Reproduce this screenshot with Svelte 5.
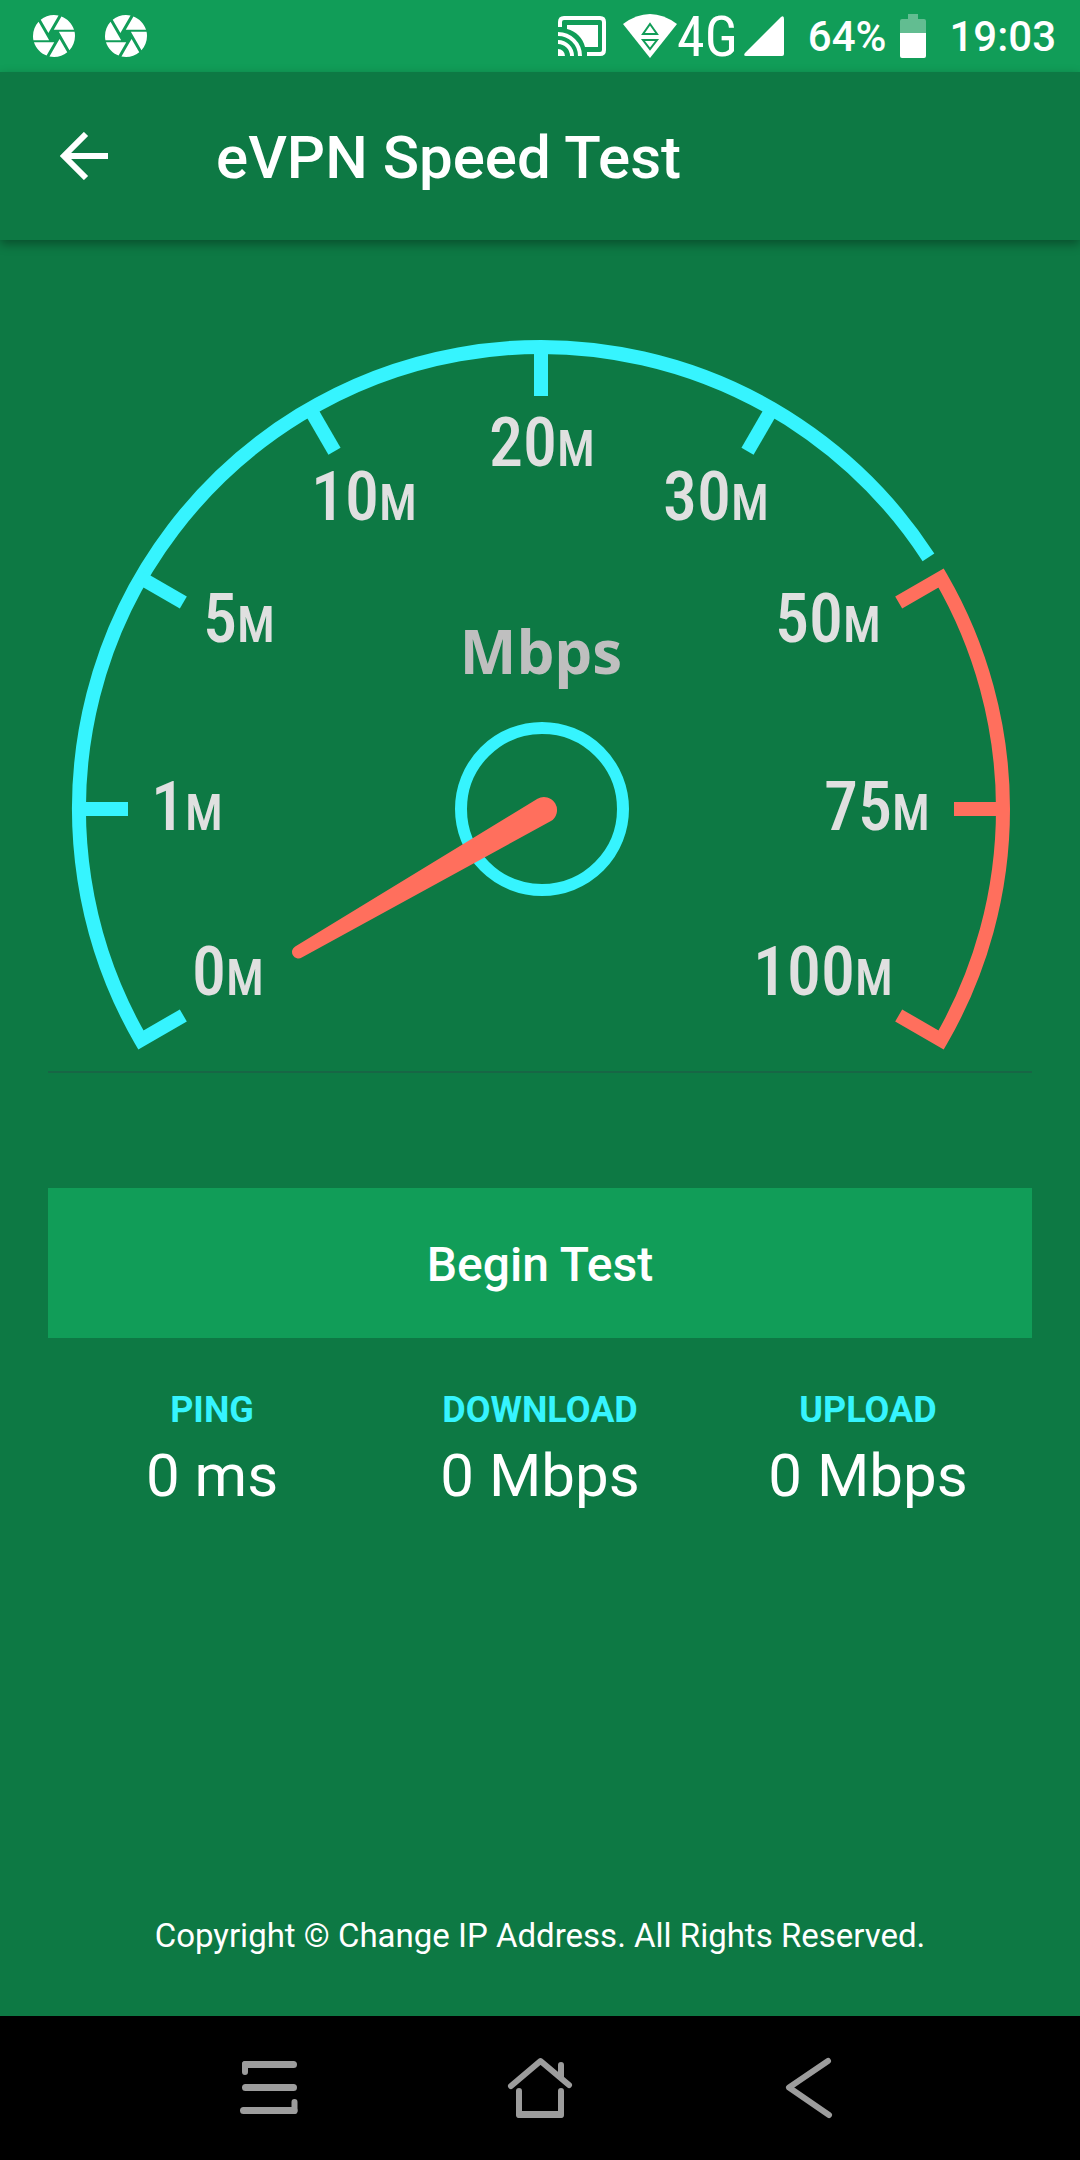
<script lang='ts'>
	// centre and radii of the dial, in gauge units
	const cx = 541;
	const cy = 809;
	const outer = 462;
	const inner = 413;

	const labels = [
		{ value: 0, x: 228, y: 995 },
		{ value: 1, x: 187, y: 830 },
		{ value: 5, x: 239, y: 642 },
		{ value: 10, x: 364, y: 520 },
		{ value: 20, x: 542, y: 466 },
		{ value: 30, x: 716, y: 520 },
		{ value: 50, x: 828, y: 642 },
		{ value: 75, x: 877, y: 830 },
		{ value: 100, x: 823, y: 995 }
	];

	const ticks = [
		{ angle: -90, high: false },
		{ angle: -60, high: false },
		{ angle: -30, high: false },
		{ angle: 0, high: false },
		{ angle: 30, high: false },
		{ angle: 90, high: true }
	];

	const results = [
		{ name: 'PING', value: '0 ms' },
		{ name: 'DOWNLOAD', value: '0 Mbps' },
		{ name: 'UPLOAD', value: '0 Mbps' }
	];

	// angle in degrees, clockwise from the top
	const point = (angle: number, radius: number) => {
		const rad = (angle * Math.PI) / 180;
		return `${cx + radius * Math.sin(rad)} ${cy - radius * Math.cos(rad)}`;
	};

	const lowArc = `M${point(-120, inner)} L${point(-120, outer)} A${outer} ${outer} 0 0 1 ${point(57, outer)}`;
	const highArc = `M${point(60, inner)} L${point(60, outer)} A${outer} ${outer} 0 0 1 ${point(120, outer)} L${point(120, inner)}`;
</script>

<div class='screen'>
	<div class='status'>
		<div class='notifications'>
			{#each [1, 2] as n}
				<svg class='shutter' viewBox='2 2 20 20' aria-hidden='true'>
					<path d='M9.4 10.5l4.77-8.26C13.47 2.09 12.75 2 12 2c-2.4 0-4.6.85-6.32 2.25l3.66 6.35.06-.1zM21.54 9c-.92-2.92-3.15-5.26-6-6.34L11.88 9h9.66zm.26 1h-7.49l.29.5 4.76 8.25C21 16.97 22 14.61 22 12c0-.69-.07-1.35-.2-2zM8.54 12l-3.9-6.75C3.01 7.03 2 9.39 2 12c0 .69.07 1.35.2 2h7.49l-1.15-2zm-6.08 3c.92 2.92 3.15 5.26 6 6.34L12.12 15H2.46zm11.27 0l-3.9 6.76c.7.15 1.42.24 2.17.24 2.4 0 4.6-.85 6.32-2.25l-3.66-6.35-.93 1.6z' />
				</svg>
			{/each}
		</div>
		<div class='system'>
			<svg class='cast' viewBox='0 0 48 40' aria-hidden='true'>
				<path class='line' d='M2 11V6Q2 2 6 2H42Q46 2 46 6V34Q46 38 42 38H29' />
				<path d='M9 9H40V31H27C25 22 18 15 9 13Z' />
				<path class='line' d='M0 26A14 14 0 0 1 14 40M0 18A22 22 0 0 1 22 40' />
				<path d='M0 33A7 7 0 0 1 7 40H0Z' />
			</svg>
			<svg class='wifi' viewBox='0 0 54 44' aria-hidden='true'>
				<path d='M0 10Q27 -10 54 10L27 44Z' />
				<path class='arrows' d='M27 10L34 20H20ZM20 26H34L27 35Z' />
			</svg>
			<span class='network'>4G</span>
			<svg class='signal' viewBox='0 0 40 40' aria-hidden='true'>
				<path d='M37 1Q40 -1 40 3V38Q40 40 38 40H2Q-1 40 1 37Z' />
			</svg>
			<span class='percent'>64%</span>
			<svg class='battery' viewBox='0 0 26 44' aria-hidden='true'>
				<path class='empty' d='M8 0H18V5H24Q26 5 26 7V19H0V7Q0 5 2 5H8Z' />
				<path d='M0 19H26V42Q26 44 24 44H2Q0 44 0 42Z' />
			</svg>
			<span class='clock'>19:03</span>
		</div>
	</div>

	<header>
		<button class='back' aria-label='Back'>
			<svg viewBox='0 0 48 48' aria-hidden='true'>
				<path d='M26 2L4 24L26 46M3 24H48' />
			</svg>
		</button>
		<h1>eVPN Speed Test</h1>
	</header>

	<main>
		<svg class='gauge' viewBox='48 288 984 783' role='img' aria-label='Speed gauge'>
			<path class='low' d={lowArc} />
			<path class='high' d={highArc} />
			{#each ticks as tick}
				<path class={tick.high ? 'high' : 'low'} d='M{point(tick.angle, inner)} L{point(tick.angle, outer)}' />
			{/each}
			{#each labels as label}
				<text class='label' x={label.x} y={label.y}>{label.value}<tspan class='unit'>M</tspan></text>
			{/each}
			<text class='mbps' x='541' y='674'>Mbps</text>
			<circle class='hub' cx='542' cy='809' r='81' />
			<path class='needle' d='M537.5 798.7A13 13 0 0 1 550.5 821.3L301.8 957.6A6.5 6.5 0 0 1 295.2 946.4Z' />
		</svg>

		<button class='begin'>Begin Test</button>

		<dl class='results'>
			{#each results as result}
				<div class='result'>
					<dt>{result.name}</dt>
					<dd>{result.value}</dd>
				</div>
			{/each}
		</dl>

		<p class='copyright'>Copyright © Change IP Address. All Rights Reserved.</p>
	</main>

	<nav>
		<button aria-label='Recent apps'>
			<svg viewBox='0 0 84 84' aria-hidden='true'>
				<path class='thick' d='M17.5 18.5H65.5M17.5 41.5H65.5M15.5 64.5H66' />
				<path class='thin' d='M17 18V26M66.5 56V65' />
			</svg>
		</button>
		<button aria-label='Home'>
			<svg viewBox='0 0 84 84' aria-hidden='true'>
				<path class='thin' d='M13 40L42.5 15L71 39M63 19V31M21 45V69M63 45V69' />
				<path class='thick' d='M22 68.5H62' />
			</svg>
		</button>
		<button aria-label='Back'>
			<svg viewBox='0 0 84 84' aria-hidden='true'>
				<path class='thin' d='M60 15L21 41.5L61 69' />
			</svg>
		</button>
	</nav>
</div>

<style>
	:global(body) {
		background: #0d7944;
	}
	.screen {
		display: flex;
		flex-direction: column;
		min-height: 100vh;
		background: #0d7944;
		color: #fff;
		font-family: Roboto, 'Liberation Sans', sans-serif;
	}
	button {
		border: 0;
		padding: 0;
		background: none;
		color: inherit;
		font: inherit;
		cursor: pointer;
	}
	svg {
		display: block;
		fill: #fff;
	}

	/* status bar */
	.status {
		display: flex;
		justify-content: space-between;
		align-items: center;
		height: 72px;
		padding: 0 24px 0 33px;
		background: #119d58;
		font-size: 42px;
		font-weight: 500;
		line-height: 48px;
	}
	.notifications {
		display: flex;
		gap: 30px;
	}
	.shutter {
		width: 42px;
		height: 42px;
	}
	.system {
		display: flex;
		align-items: center;
	}
	.system span {
		padding-top: 2px;
	}
	.cast {
		width: 48px;
		height: 40px;
		margin-right: 17px;
	}
	.cast .line {
		fill: none;
		stroke: #fff;
		stroke-width: 4;
	}
	.wifi {
		width: 54px;
		height: 44px;
	}
	.arrows {
		stroke: #119d58;
		stroke-width: 2;
	}
	.network {
		font-family: 'Roboto Condensed', Roboto, sans-serif;
		font-size: 56px;
		font-weight: 400;
	}
	.signal {
		width: 40px;
		height: 40px;
		margin: 0 24px 0 6px;
	}
	.battery {
		width: 26px;
		height: 44px;
		margin: 0 23px 0 14px;
	}
	.empty {
		fill: #62bd91;
	}

	header {
		display: flex;
		align-items: center;
		height: 168px;
		padding: 0 60px;
		box-shadow: 0 4px 10px rgba(0, 0, 0, 0.35);
	}
	.back {
		margin-right: 108px;
	}
	.back svg {
		width: 48px;
		height: 48px;
		fill: none;
		stroke: #fff;
		stroke-width: 6;
	}
	h1 {
		margin: 0;
		padding-top: 2px;
		font-size: 60px;
		font-weight: 500;
	}

	main {
		display: flex;
		flex: 1;
		flex-direction: column;
		padding: 48px 48px 0;
	}
	.gauge {
		width: 100%;
		border-bottom: 2px solid #176645;
	}
	.low,
	.high,
	.hub {
		fill: none;
		stroke: #36f4fe;
		stroke-width: 14;
	}
	.high {
		stroke: #ff6f5d;
	}
	.hub {
		stroke-width: 12;
	}
	.needle {
		fill: #ff6f5d;
	}
	.label {
		fill: #e0e0e0;
		font-family: 'Roboto Condensed', 'Liberation Sans Narrow', Roboto, sans-serif;
		font-size: 68px;
		font-weight: 500;
		text-anchor: middle;
	}
	.unit {
		font-size: 50px;
	}
	.mbps {
		fill: #bfbfbf;
		font-family: 'Open Sans', 'Noto Sans', sans-serif;
		font-size: 60px;
		font-weight: 700;
		text-anchor: middle;
	}

	.begin {
		height: 150px;
		margin-top: 115px;
		padding-top: 2px;
		background: #119d58;
		font-size: 48px;
		font-weight: 500;
	}
	.results {
		display: flex;
		margin: 48px 0 0;
		text-align: center;
	}
	.result {
		flex: 1;
	}
	dt {
		color: #36f4fe;
		font-size: 36px;
		font-weight: 700;
		line-height: 48px;
	}
	dd {
		margin: 6px 0 0;
		font-size: 60px;
		line-height: 72px;
	}
	.copyright {
		margin: auto 0 59px;
		font-size: 33px;
		line-height: 42px;
		text-align: center;
	}

	nav {
		display: flex;
		justify-content: space-around;
		align-items: center;
		height: 144px;
		padding: 0 135px;
		background: #000;
	}
	nav svg {
		width: 84px;
		height: 84px;
		fill: none;
		stroke: #9c9c9c;
		stroke-linecap: round;
		stroke-linejoin: round;
	}
	.thin {
		stroke-width: 6;
	}
	.thick {
		stroke-width: 7;
	}
</style>
